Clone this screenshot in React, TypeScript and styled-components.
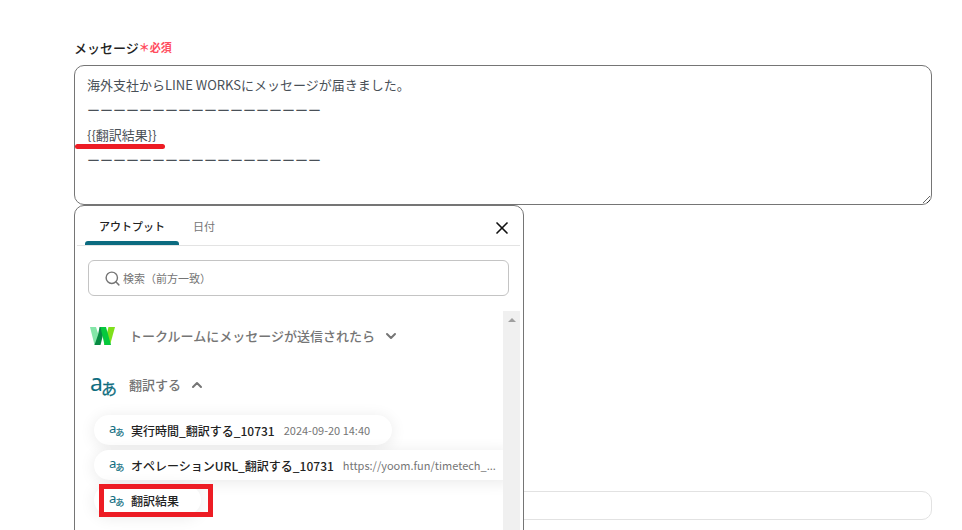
import React, { useState } from "react";
import styled, { createGlobalStyle, css } from "styled-components";
import { ChevronDown, ChevronUp, Search, X } from "lucide-react";

const GlobalStyle = createGlobalStyle`
  *, *::before, *::after { box-sizing: border-box; }
  body {
    margin: 0;
    background: #fff;
    color: #222;
    font-family: "Noto Sans CJK JP", "Noto Sans", sans-serif;
    font-size: 13px;
  }
  button, input, textarea { font: inherit; }
`;

const Page = styled.main`
  height: 100vh;
  overflow: hidden;
  padding: 37px 30px 0 74px;
`;

const Label = styled.label`
  display: flex;
  align-items: center;
  height: 20px;
  margin-bottom: 8px;
  font-weight: 500;
`;

const Required = styled.span`
  color: #ff4d5e;
  font-size: 11px;
  font-weight: 700;
`;

const Field = styled.div`
  position: relative;
`;

const MessageBox = styled.textarea`
  display: block;
  width: 100%;
  height: 140px;
  padding: 6px 12px;
  border: 1px solid #757575;
  border-radius: 10px;
  outline: none;
  background: #fff;
  color: #495057;
  line-height: 25px;
  resize: vertical;
`;

const Underline = styled.span`
  position: absolute;
  top: 79px;
  left: 1px;
  width: 90px;
  height: 5px;
  border-radius: 3px;
  background: #ed1c24;
`;

const NextInput = styled.input`
  display: block;
  width: 100%;
  height: 29px;
  margin-top: 286px;
  padding: 0 12px;
  border: 1px solid #e2e2e2;
  border-radius: 10px;
  outline: none;
`;

const Popover = styled.section`
  position: absolute;
  top: 100%;
  left: 0;
  width: 450px;
  height: 480px;
  display: flex;
  flex-direction: column;
  padding: 0 3px 0 2px;
  border: 1px solid #757575;
  border-radius: 10px;
  background: #fff;
`;

const PopoverHeader = styled.header`
  display: flex;
  align-items: stretch;
  height: 40px;
  padding-left: 8px;
  border-bottom: 1px solid #e3e3e3;
`;

const Tab = styled.button<{ $active?: boolean }>`
  position: relative;
  display: flex;
  align-items: center;
  padding: 0 14px;
  border: 0;
  background: none;
  color: #757575;
  font-size: 11px;
  font-weight: 400;
  line-height: 16px;
  cursor: pointer;
  ${({ $active }) =>
    $active &&
    css`
      color: #222;
      font-weight: 500;
      &::after {
        content: "";
        position: absolute;
        inset: auto 0 0;
        height: 4px;
        border-radius: 3px 3px 0 0;
        background: #0b6b80;
      }
    `}
`;

const CloseButton = styled.button`
  display: flex;
  align-items: center;
  margin-left: auto;
  padding: 4px 8px 0;
  border: 0;
  background: none;
  color: #111;
  cursor: pointer;
`;

const SearchBox = styled.label`
  display: flex;
  flex: none;
  align-items: center;
  gap: 2px;
  height: 36px;
  margin: 14px 11px 15px;
  padding: 0 15px;
  border: 1px solid #c4c4c4;
  border-radius: 6px;
  color: #757575;
`;

const SearchInput = styled.input`
  flex: 1;
  min-width: 0;
  padding: 0;
  border: 0;
  outline: none;
  background: none;
  font-size: 11px;
  &::placeholder { color: #757575; }
`;

const ScrollArea = styled.div`
  display: flex;
  flex: 1;
  min-height: 0;
`;

const List = styled.div`
  flex: 1;
  min-width: 0;
  overflow: hidden;
  padding-left: 13px;
`;

const ScrollTrack = styled.div`
  display: flex;
  justify-content: center;
  width: 17px;
  padding-top: 7px;
  background: #f0f0f0;
`;

const ScrollArrow = styled.span`
  width: 0;
  height: 0;
  border: 4px solid transparent;
  border-top-width: 0;
  border-bottom-color: #a0a0a0;
`;

const GroupButton = styled.button`
  display: flex;
  align-items: center;
  width: 100%;
  height: 49px;
  padding: 0;
  border: 0;
  background: none;
  color: #757575;
  font-weight: 500;
  white-space: nowrap;
  cursor: pointer;
`;

const GroupName = styled.span`
  margin: 0 8px 0 11px;
  line-height: 20px;
`;

const Chips = styled.div`
  display: flex;
  flex-direction: column;
  align-items: flex-start;
  gap: 5px;
  padding: 6px 0 0 4px;
`;

const ChipSlot = styled.div`
  position: relative;
`;

const Chip = styled.button`
  display: flex;
  align-items: center;
  height: 30px;
  padding: 0 22px 0 15px;
  border: 0;
  border-radius: 15px;
  background: #fff;
  box-shadow: 0 2px 16px rgba(0, 0, 0, 0.09);
  color: #222;
  font-size: 12px;
  font-weight: 500;
  white-space: nowrap;
  cursor: pointer;
`;

const ChipName = styled.span`
  margin-left: 6px;
`;

const ChipValue = styled.span`
  margin-left: 9px;
  color: #757575;
  font-size: 11px;
  font-weight: 400;
`;

const Highlight = styled.span`
  position: absolute;
  inset: -1px -12px -2px 5px;
  border: 5px solid #ed1c24;
  pointer-events: none;
`;

const IconSvg = styled.svg`
  flex: none;
  overflow: visible;
`;

const IconText = styled.text`
  fill: #0f6d80;
  font-family: "Noto Sans", "Noto Sans CJK JP", sans-serif;
  font-weight: 400;
`;

function TranslateIcon({ size }: { size: number }) {
  return (
    <IconSvg width={size} height={size} viewBox="0 0 28 28" aria-hidden="true">
      <IconText x="0" y="20" fontSize="23">a</IconText>
      <IconText x="11" y="24" fontSize="16" stroke="#0f6d80" strokeWidth="0.3">あ</IconText>
    </IconSvg>
  );
}

function WorksIcon() {
  return (
    <IconSvg width="28" height="28" viewBox="0 0 28 28" aria-hidden="true">
      <path d="M18.500 5H25l-5 18h-6z" fill="#7fe01b" />
      <path d="M0 5h6l3.500 11L7 23H4.500z" fill="#84e6a8" />
      <path d="M9.500 5H15l-4.500 18H4.500L8 13z" fill="#078a42" />
      <path d="M10.500 5H16l5 18h-6.500z" fill="#06c93d" />
    </IconSvg>
  );
}

const RULE = "ー".repeat(18);
const MESSAGE = [
  "海外支社からLINE WORKSにメッセージが届きました。",
  RULE,
  "{{翻訳結果}}",
  RULE,
].join("\n");

const OUTPUTS = [
  { name: "実行時間_翻訳する_10731", value: "2024-09-20 14:40" },
  { name: "オペレーションURL_翻訳する_10731", value: "https://yoom.fun/timetech_..." },
  { name: "翻訳結果", marked: true },
];

export default function App() {
  const [message, setMessage] = useState(MESSAGE);

  return (
    <>
      <GlobalStyle />
      <Page>
        <Label htmlFor="message">
          メッセージ<Required>＊必須</Required>
        </Label>
        <Field>
          <MessageBox
            id="message"
            spellCheck={false}
            value={message}
            onChange={(e) => setMessage(e.target.value)}
          />
          <Underline />
          <Popover>
            <PopoverHeader role="tablist">
              <Tab type="button" role="tab" aria-selected="true" $active>アウトプット</Tab>
              <Tab type="button" role="tab" aria-selected="false">日付</Tab>
              <CloseButton type="button" aria-label="閉じる">
                <X size={20} strokeWidth={2} />
              </CloseButton>
            </PopoverHeader>
            <SearchBox>
              <Search size={17} strokeWidth={2} />
              <SearchInput type="text" aria-label="検索" placeholder="検索（前方一致）" />
            </SearchBox>
            <ScrollArea>
              <List>
                <GroupButton type="button" aria-expanded="false">
                  <WorksIcon />
                  <GroupName>トークルームにメッセージが送信されたら</GroupName>
                  <ChevronDown size={16} strokeWidth={3} />
                </GroupButton>
                <GroupButton type="button" aria-expanded="true">
                  <TranslateIcon size={28} />
                  <GroupName>翻訳する</GroupName>
                  <ChevronUp size={16} strokeWidth={3} />
                </GroupButton>
                <Chips>
                  {OUTPUTS.map((output) => (
                    <ChipSlot key={output.name}>
                      <Chip type="button">
                        <TranslateIcon size={16} />
                        <ChipName>{output.name}</ChipName>
                        {output.value && <ChipValue>{output.value}</ChipValue>}
                      </Chip>
                      {output.marked && <Highlight />}
                    </ChipSlot>
                  ))}
                </Chips>
              </List>
              <ScrollTrack>
                <ScrollArrow />
              </ScrollTrack>
            </ScrollArea>
          </Popover>
        </Field>
        <NextInput type="text" aria-label="入力" />
      </Page>
    </>
  );
}
